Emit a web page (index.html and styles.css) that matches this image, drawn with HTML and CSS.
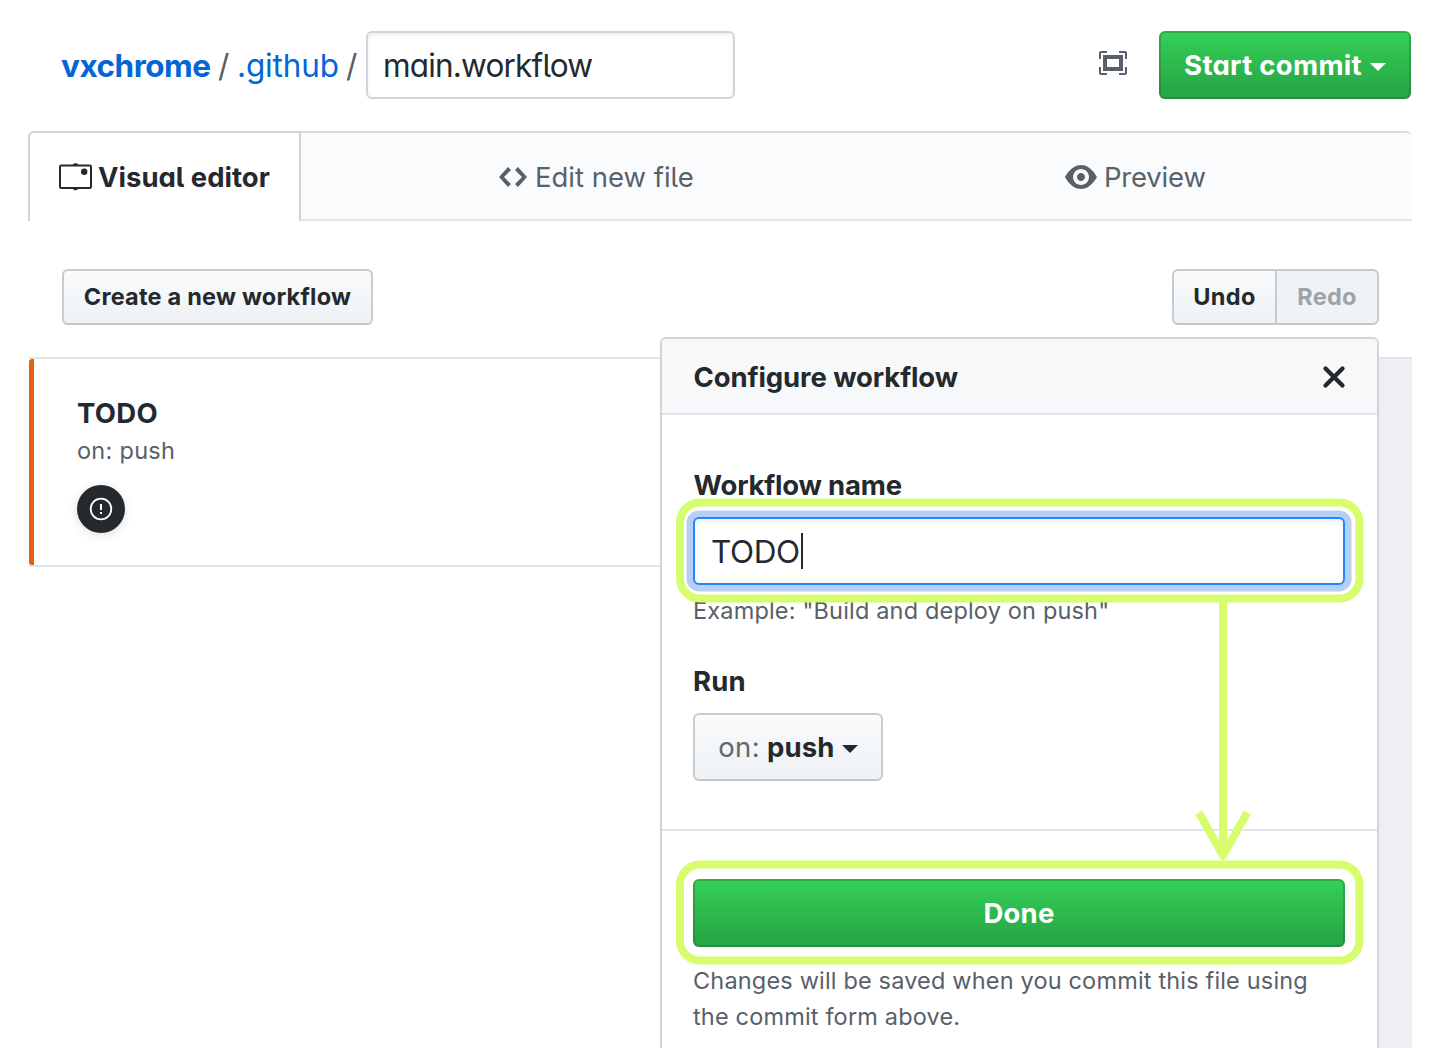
FILE: index.html
```
<!DOCTYPE html>
<html lang="en">
<head>
<meta charset="utf-8">
<title>main.workflow</title>
<link rel="stylesheet" href="styles.css">
</head>
<body>
<header class="file-header alt-glyphs">
  <a class="crumb crumb-repo">vxchrome</a>
  <span class="slash">/</span>
  <a class="crumb crumb-dir">.github</a>
  <span class="slash slash-last">/</span>
  <div class="input filename">main.workflow</div>
  <svg class="screen-full" width="28" height="32" viewBox="0 0 14 16"><path fill-rule="evenodd" d="M13 10h1v3c0 .547-.453 1-1 1h-3v-1h3v-3zM1 10H0v3c0 .547.453 1 1 1h3v-1H1v-3zm0-7h3V2H1c-.547 0-1 .453-1 1v3h1V3zm1 1h10v8H2V4zm2 6h6V6H4v4zm6-8v1h3v3h1V3c0-.547-.453-1-1-1h-3z"/></svg>
  <button class="btn btn-green start-commit"><span>Start commit</span><i class="caret"></i></button>
</header>

<nav class="tabs alt-glyphs">
  <a class="tab tab-active">
    <svg width="34" height="30" viewBox="0 0 34 30"><rect x="2" y="3.500" width="31" height="22.500" rx="1.200" fill="none" stroke="currentColor" stroke-width="2"/><path d="M14.800 3c.400-2.400 5-2.400 5.400 0zM14.800 26.500c.400 2.400 5 2.400 5.400 0z"/><circle cx="26.200" cy="9.700" r="3.200"/></svg>
    <span class="tab-visual">Visual editor</span>
  </a>
  <a class="tab tab-edit">
    <svg width="28" height="32" viewBox="0 0 14 16"><path fill-rule="evenodd" d="M9.500 3L8 4.500 11.500 8 8 11.500 9.500 13 14 8 9.500 3zm-5 0L0 8l4.500 5L6 11.500 2.500 8 6 4.500 4.500 3z"/></svg>
    <span class="tab-edit-label">Edit new file</span>
  </a>
  <a class="tab tab-preview">
    <svg width="32" height="32" viewBox="0 0 16 16"><path fill-rule="evenodd" d="M8.060 2C3 2 0 8 0 8s3 6 8.060 6C13 14 16 8 16 8s-3-6-7.940-6zM8 12c-2.200 0-4-1.780-4-4 0-2.200 1.800-4 4-4 2.220 0 4 1.800 4 4 0 2.220-1.780 4-4 4zm2-4c0 1.110-.890 2-2 2-1.110 0-2-.890-2-2 0-1.110.890-2 2-2 1.110 0 2 .890 2 2z"/></svg>
    <span class="tab-preview-label">Preview</span>
  </a>
</nav>

<div class="toolbar">
  <button class="btn btn-create">Create a new workflow</button>
  <div class="history">
    <button class="btn btn-undo">Undo</button>
    <button class="btn btn-redo" disabled>Redo</button>
  </div>
</div>

<main class="canvas">
  <section class="workflow">
    <h3>TODO</h3>
    <p>on: push</p>
    <div class="alert">
      <svg width="24" height="24" viewBox="0 0 24 24"><circle cx="12" cy="12" r="10.300" fill="none" stroke="#fff" stroke-width="1.800"/><path d="M11 7h2v6h-2zM11 15h2v2h-2z" fill="#fff"/></svg>
    </div>
  </section>
  <div class="backdrop"></div>
</main>

<aside class="dialog">
  <div class="dialog-head">
    <h2>Configure workflow</h2>
    <svg width="24" height="24" viewBox="0 0 24 24"><path d="M3.500 3.500l17 17M20.500 3.500l-17 17" stroke="currentColor" stroke-width="4.300" stroke-linecap="round"/></svg>
  </div>
  <div class="dialog-body">
    <label class="label-name">Workflow name</label>
    <div class="input name-input"><span>TODO</span><i class="cursor"></i></div>
    <p class="example">Example: "Build and deploy on push"</p>
    <label class="label-run">Run</label>
    <button class="btn btn-event"><span class="on">on:</span><span class="push">push</span><i class="caret"></i></button>
  </div>
  <div class="dialog-foot">
    <button class="btn btn-green btn-done">Done</button>
    <p>Changes will be saved when you commit this file using<br>the commit form above.</p>
  </div>
  <svg class="guide" width="719" height="711" viewBox="660 337 719 711" fill="none" stroke="#d7fd6e" stroke-width="8">
    <rect x="680" y="502.500" width="679.500" height="96" rx="20"/>
    <rect x="680" y="864.500" width="679.500" height="96" rx="20"/>
    <path d="M1223 602V850"/>
    <path d="M1198.800 812.500L1223 855.500L1247.200 812.500" stroke-linejoin="round"/>
  </svg>
</aside>
</body>
</html>
```
FILE: styles.css
```
* { box-sizing: border-box; }
body {
  margin: 0;
  width: 1440px;
  height: 1048px;
  overflow: hidden;
  position: relative;
  background: #fff;
  color: #24292e;
  font-family: Inter, "Liberation Sans", sans-serif;
  font-size: 27.5px;
}
h2, h3, p { margin: 0; }
svg { display: block; fill: currentColor; flex: none; }
button { font: inherit; color: inherit; padding: 0; margin: 0; }
.alt-glyphs { font-feature-settings: "cv11", "cv05"; }

.btn {
  display: flex;
  align-items: center;
  justify-content: center;
  border: 2px solid #c8cbcf;
  border-bottom-color: #c2c6ca;
  border-radius: 6px;
  background: linear-gradient(#fafbfc, #eff3f6 90%) border-box;
  font-weight: 650;
  font-size: 23.5px;
  white-space: nowrap;
}
.btn-green {
  color: #fff;
  font-size: 27.5px;
  border-color: rgba(27, 31, 35, .2);
  background: linear-gradient(#34d058, #28a745 90%) border-box;
}
.caret {
  margin-top: 3px;
  border: 8px solid transparent;
  border-top-color: currentColor;
  border-bottom: 0;
}
.input {
  display: flex;
  align-items: center;
  height: 68px;
  border: 2px solid #d1d5da;
  border-radius: 6px;
  background: #fff;
  box-shadow: inset 0 2px 4px rgba(27, 31, 35, .075);
  font-size: 31.5px;
}

.file-header {
  display: flex;
  align-items: center;
  padding: 31px 29px 0 61px;
  height: 99px;
  font-size: 31.5px;
  white-space: nowrap;
}
.crumb { color: #0366d6; }
.crumb-repo { width: 157px; font-weight: 650; letter-spacing: -.5px; }
.crumb-dir { width: 109px; letter-spacing: -.15px; }
.slash { width: 19px; color: #586069; }
.slash-last { width: 20px; }
.filename { width: 369px; padding-left: 15px; letter-spacing: -.82px; }
.screen-full { margin: -4px 32px 0 auto; color: #586069; }
.start-commit { width: 252px; height: 68px; gap: 8px; letter-spacing: .3px; }

.tabs {
  display: flex;
  margin: 32px 28px 0;
  height: 90px;
  border-top: 2px solid #d8dbdf;
  border-radius: 6px 6px 0 0;
  background: #fafbfd;
  color: #586069;
  white-space: nowrap;
}
.tab {
  display: flex;
  align-items: center;
  padding-top: 2px;
  border-bottom: 2px solid #e1e4e8;
}
.tab-active {
  width: 273px;
  margin-top: -2px;
  height: 90px;
  padding: 0 0 0 28px;
  gap: 6px;
  border: 2px solid #d1d5da;
  border-bottom: 0;
  border-radius: 6px 0 0 0;
  background: #fff;
  color: #24292e;
  font-weight: 650;
}
.tab-edit { width: 565px; padding-left: 198px; gap: 8px; }
.tab-preview { flex: 1; padding-left: 199px; gap: 7px; }
.tab-preview-label { letter-spacing: -.2px; }

.toolbar {
  display: flex;
  justify-content: space-between;
  padding: 48px 61px 0 62px;
}
.toolbar .btn { height: 56px; padding-bottom: 2px; }
.btn-create { width: 311px; letter-spacing: .22px; }
.history { display: flex; }
.btn-undo { width: 105px; border-radius: 6px 0 0 6px; letter-spacing: .4px; }
.btn-redo {
  width: 102px;
  border-left: 0;
  border-radius: 0 6px 6px 0;
  background: #eff3f6;
  color: #9fa3a7;
  letter-spacing: .3px;
}

.canvas {
  display: flex;
  align-items: flex-start;
  margin: 32px 28px 0;
  height: 691px;
}
.workflow {
  flex: 1;
  height: 210px;
  border: solid #e1e4e8;
  border-width: 2px 0;
  margin-left: 1px;
  padding: 36px 0 0 44px;
  position: relative;
}
.workflow::before {
  content: "";
  position: absolute;
  left: 0;
  top: 0;
  bottom: 0;
  width: 5px;
  border-radius: 3px 0 0 3px;
  background: #e36209;
}
.workflow h3 {
  margin-left: 4px;
  font-size: 27.5px;
  line-height: 36px;
  font-weight: 650;
  letter-spacing: .3px;
}
.workflow p {
  margin-left: 4px;
  font-size: 23.5px;
  line-height: 40px;
  color: #586069;
  letter-spacing: .28px;
}
.alert {
  display: flex;
  align-items: center;
  justify-content: center;
  width: 48px;
  height: 48px;
  margin: 14px 0 0 4.400px;
  border-radius: 50%;
  background: #24292e;
  box-shadow: 0 2px 10px rgba(27, 31, 35, .15);
}
.backdrop {
  width: 34px;
  height: 691px;
  border-top: 2px solid #e1e4e8;
  background: #eeeff4;
}

.dialog {
  position: absolute;
  left: 660px;
  top: 337px;
  width: 719px;
  height: 740px;
  border: 2px solid #d1d5da;
  border-radius: 6px;
  background: #fff;
}
.dialog-head {
  display: flex;
  align-items: center;
  justify-content: space-between;
  height: 76px;
  padding: 1px 31.500px 0 31.500px;
  border-bottom: 2px solid #e1e4e8;
  border-radius: 4px 4px 0 0;
  background: #f6f8fa;
}
.dialog-head h2 { font-size: 27.5px; font-weight: 650; letter-spacing: -.12px; }
.dialog-body {
  display: flex;
  flex-direction: column;
  height: 416px;
  padding: 52px 32px 0 31px;
  border-bottom: 2px solid #e1e4e8;
}
.dialog label { font-weight: 650; line-height: 36px; }
.label-name { letter-spacing: -.2px; padding-left: .5px; }
.name-input {
  margin-top: 14px;
  padding-left: 16px;
  border-color: #2188ff;
  box-shadow: inset 0 2px 4px rgba(27, 31, 35, .075), 0 0 0 6.500px #b5cff5;
}
.name-input span { letter-spacing: -.41px; }
.cursor { width: 2px; height: 36px; margin-left: 1px; background: #24292e; }
.example {
  margin-top: 8px;
  font-size: 23.5px;
  line-height: 36px;
  color: #586069;
  letter-spacing: .17px;
}
.label-run { margin-top: 34px; letter-spacing: .2px; }
.btn-event {
  width: 190px;
  height: 68px;
  margin-top: 14px;
  font-size: 27.5px;
}
.on { font-weight: 400; color: #62676c; letter-spacing: .3px; margin-right: 7px; }
.push { letter-spacing: .2px; margin-right: 7px; }
.dialog-foot { padding: 48px 32px 0 31px; }
.btn-done { width: 100%; height: 68px; letter-spacing: .2px; }
.dialog-foot p {
  margin-top: 16px;
  font-size: 23.5px;
  line-height: 36px;
  color: #586069;
  letter-spacing: .17px;
  white-space: nowrap;
}
.guide { position: absolute; left: -2px; top: -2px; fill: none; }
```
